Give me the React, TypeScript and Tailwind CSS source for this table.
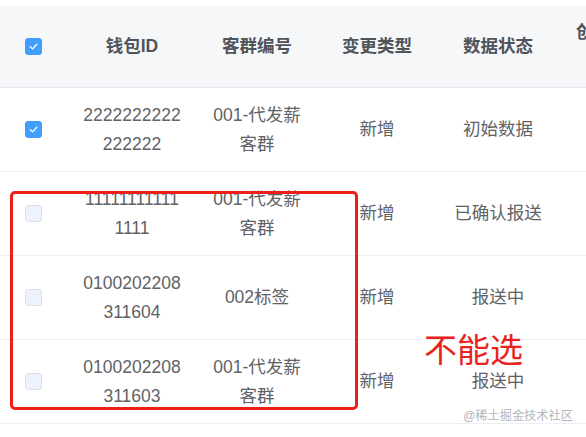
import React from "react"

type Row = {
  id: string[]
  group: string[]
  change: string
  status: string
  checked: boolean
  disabled: boolean
}

const rows: Row[] = [
  { id: ["2222222222", "222222"], group: ["001-代发薪", "客群"], change: "新增", status: "初始数据", checked: true, disabled: false },
  { id: ["11111111111", "1111"], group: ["001-代发薪", "客群"], change: "新增", status: "已确认报送", checked: false, disabled: true },
  { id: ["0100202208", "311604"], group: ["002标签"], change: "新增", status: "报送中", checked: false, disabled: true },
  { id: ["0100202208", "311603"], group: ["001-代发薪", "客群"], change: "新增", status: "报送中", checked: false, disabled: true },
]

const cols = "grid grid-cols-[66px_132px_118px_122px_120px_106px]"

function Checkbox({ checked, disabled }: { checked: boolean; disabled: boolean }) {
  if (checked) {
    return (
      <span className="w-[17px] h-[17px] rounded-[3px] bg-[#409eff] border border-[#409eff] flex items-center justify-center">
        <svg width="11" height="11" viewBox="0 0 12 12" fill="none">
          <path d="M2.5 6.2 L5 8.6 L9.6 3.6" stroke="white" strokeWidth="1.4" strokeLinecap="round" strokeLinejoin="round" />
        </svg>
      </span>
    )
  }
  return (
    <span
      className={`w-[17px] h-[17px] rounded-[3px] border ${
        disabled ? "bg-[#edf2fc] border-[#dcdfe6]" : "bg-white border-[#dcdfe6]"
      }`}
    />
  )
}

export default function App() {
  return (
    <div
      className="relative w-[586px] h-[437px] overflow-hidden bg-white pt-[6px]"
      style={{ fontFamily: '"Liberation Sans", "Noto Sans CJK SC", sans-serif' }}
    >
      <div className="w-[664px]">
        {/* header */}
        <div className={`${cols} h-[82px] bg-[#f6f7f9] border-b border-[#e4e7ed] text-[17.5px] leading-[29px] font-bold text-[#4f535a]`}>
          <div className="flex items-center justify-center">
            <Checkbox checked disabled={false} />
          </div>
          <div className="flex items-center justify-center">钱包ID</div>
          <div className="flex items-center justify-center">客群编号</div>
          <div className="flex items-center justify-center">变更类型</div>
          <div className="flex items-center justify-center">数据状态</div>
          <div className="flex flex-col items-center justify-center">
            <span>创建时间</span>
            <span>间</span>
          </div>
        </div>

        {/* body */}
        {rows.map((r, i) => (
          <div key={i} className={`${cols} h-[84px] border-b border-[#ebeef5] text-[17.5px] leading-[29px] text-[#606266]`}>
            <div className="flex items-center justify-center">
              <Checkbox checked={r.checked} disabled={r.disabled} />
            </div>
            <div className="flex flex-col items-center justify-center">
              {r.id.map((l) => (
                <span key={l}>{l}</span>
              ))}
            </div>
            <div className="flex flex-col items-center justify-center">
              {r.group.map((l) => (
                <span key={l}>{l}</span>
              ))}
            </div>
            <div className="flex items-center justify-center">{r.change}</div>
            <div className="flex items-center justify-center">{r.status}</div>
            <div />
          </div>
        ))}
      </div>

      {/* annotation overlay */}
      <div className="absolute left-[10px] top-[191px] w-[348px] h-[219px] border-[3px] border-[#ee1f1a] rounded-[5px]" />
      <div className="absolute left-[424px] top-[331px] text-[33px] leading-[40px] text-[#e8231c]">不能选</div>
      <div className="absolute left-[463px] top-[409px] text-[12.2px] leading-[15px] text-[#b4b6ba]">@稀土掘金技术社区</div>
    </div>
  )
}
